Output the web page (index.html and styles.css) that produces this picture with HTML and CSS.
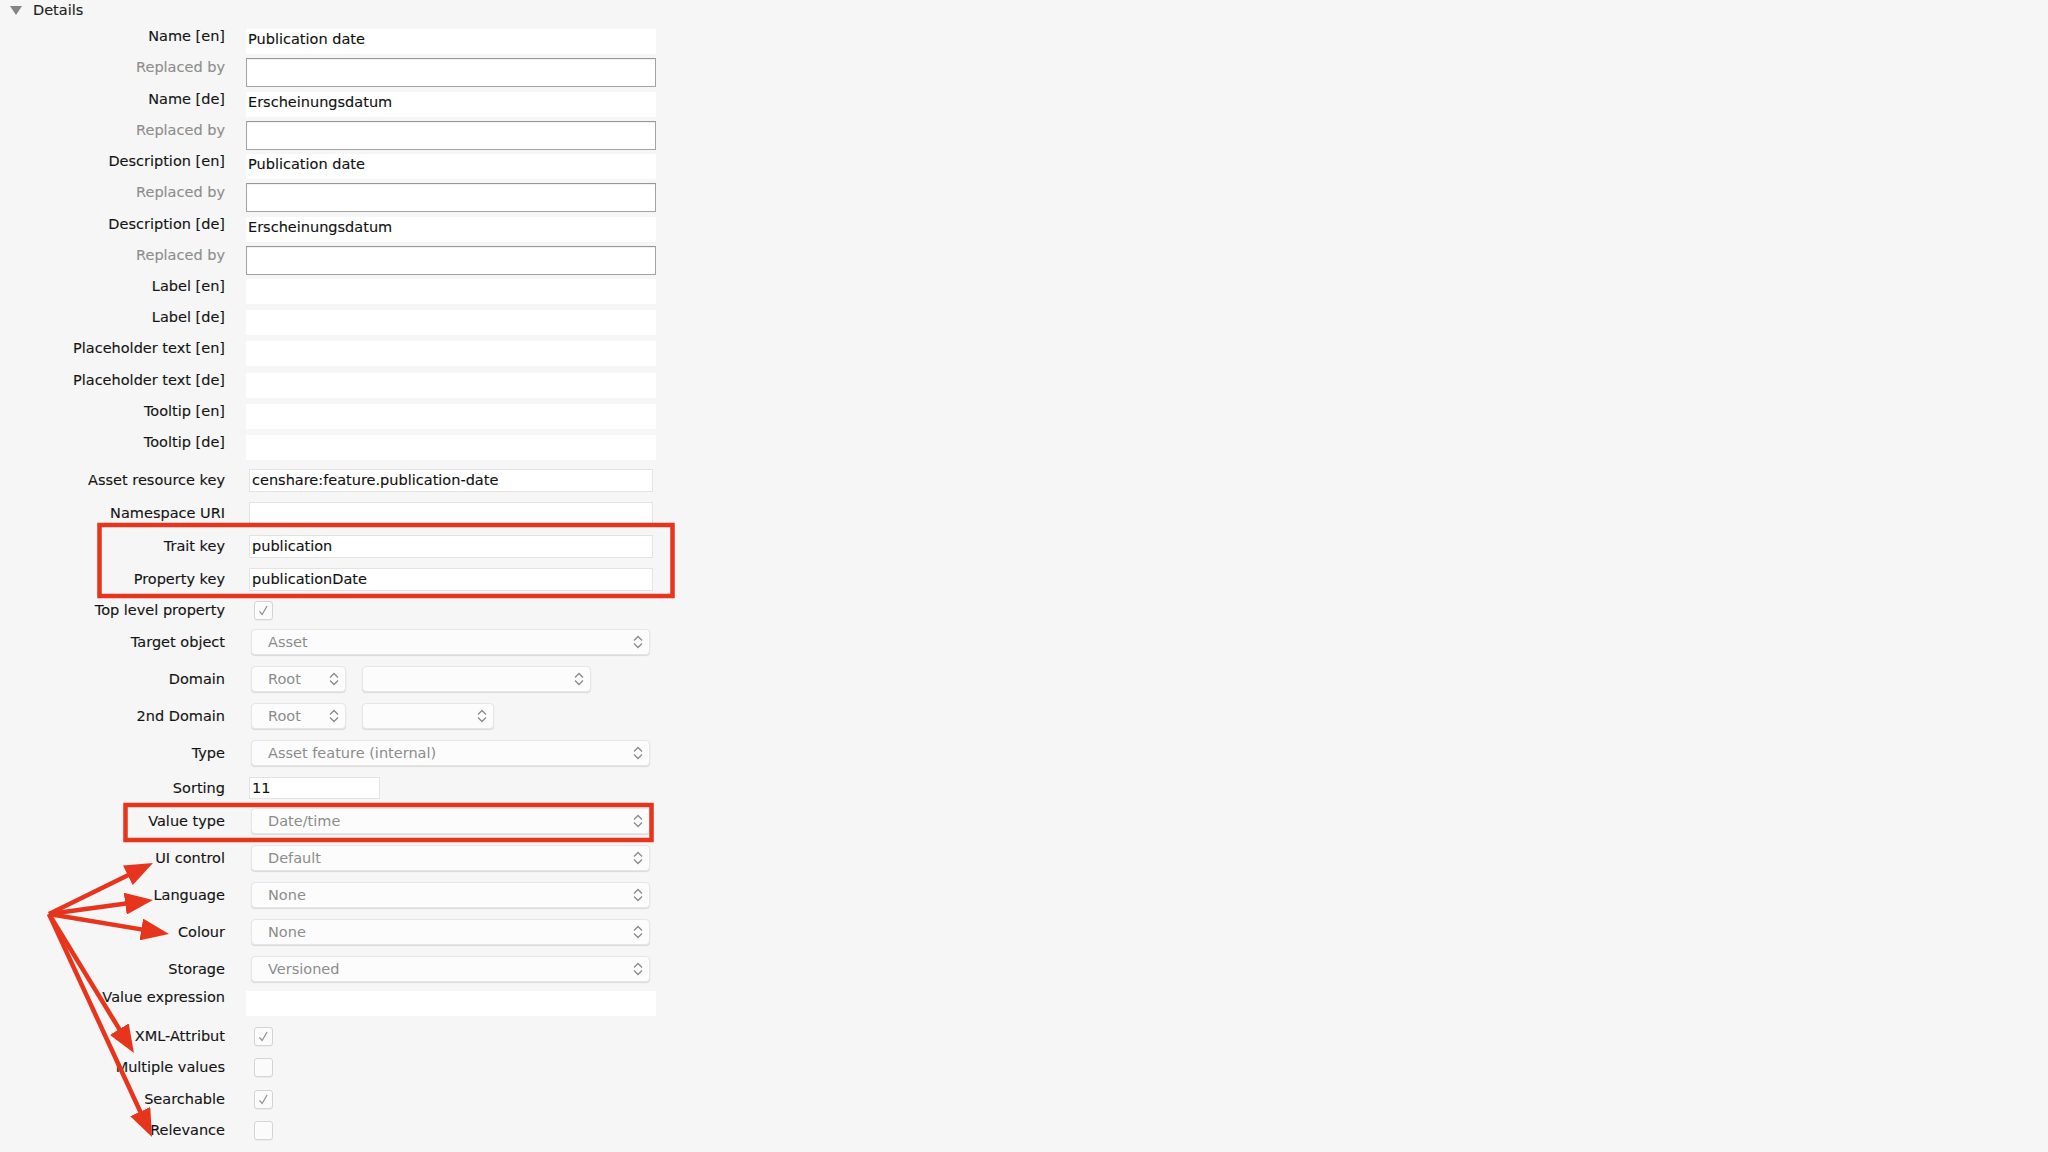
FILE: index.html
```html
<!DOCTYPE html>
<html lang="en">
<head>
  <meta charset="UTF-8" />
  <title>Details</title>
  <link rel="stylesheet" href="styles.css">
</head>
<body>

  <div class="details-head"><span class="twisty"></span>Details</div>

  <div class="form">
    <div class="row r-plain"><label>Name [en]</label><div class="plain">Publication date</div></div>
    <div class="row r-replace"><label class="muted">Replaced by</label><div class="box"></div></div>
    <div class="row r-plain"><label>Name [de]</label><div class="plain">Erscheinungsdatum</div></div>
    <div class="row r-replace"><label class="muted">Replaced by</label><div class="box"></div></div>
    <div class="row r-plain"><label>Description [en]</label><div class="plain">Publication date</div></div>
    <div class="row r-replace"><label class="muted">Replaced by</label><div class="box"></div></div>
    <div class="row r-plain"><label>Description [de]</label><div class="plain">Erscheinungsdatum</div></div>
    <div class="row r-replace"><label class="muted">Replaced by</label><div class="box"></div></div>

    <div class="row r-text"><label>Label [en]</label><div class="plain"></div></div>
    <div class="row r-text"><label>Label [de]</label><div class="plain"></div></div>
    <div class="row r-text"><label>Placeholder text [en]</label><div class="plain"></div></div>
    <div class="row r-text"><label>Placeholder text [de]</label><div class="plain"></div></div>
    <div class="row r-text"><label>Tooltip [en]</label><div class="plain"></div></div>
    <div class="row r-text r-last"><label>Tooltip [de]</label><div class="plain"></div></div>

    <div class="row r-input"><label>Asset resource key</label><div class="input">censhare:feature.publication-date</div></div>
    <div class="row r-input"><label>Namespace URI</label><div class="input"></div></div>
    <div class="row r-input"><label>Trait key</label><div class="input">publication</div></div>
    <div class="row r-input"><label>Property key</label><div class="input">publicationDate</div></div>

    <div class="row r-check r-top"><label>Top level property</label><div class="check on"></div></div>

    <div class="row r-select"><label>Target object</label>
      <div class="select"><span>Asset</span><svg viewBox="0 0 10 14"><path d="M1 5.5L5 1.5L9 5.5M1 8.5L5 12.5L9 8.5"/></svg></div>
    </div>
    <div class="row r-select"><label>Domain</label>
      <div class="select-pair">
        <div class="select root"><span>Root</span><svg viewBox="0 0 10 14"><path d="M1 5.5L5 1.5L9 5.5M1 8.5L5 12.5L9 8.5"/></svg></div>
        <div class="select wide"><span></span><svg viewBox="0 0 10 14"><path d="M1 5.5L5 1.5L9 5.5M1 8.5L5 12.5L9 8.5"/></svg></div>
      </div>
    </div>
    <div class="row r-select"><label>2nd Domain</label>
      <div class="select-pair">
        <div class="select root"><span>Root</span><svg viewBox="0 0 10 14"><path d="M1 5.5L5 1.5L9 5.5M1 8.5L5 12.5L9 8.5"/></svg></div>
        <div class="select mid"><span></span><svg viewBox="0 0 10 14"><path d="M1 5.5L5 1.5L9 5.5M1 8.5L5 12.5L9 8.5"/></svg></div>
      </div>
    </div>
    <div class="row r-select"><label>Type</label>
      <div class="select"><span>Asset feature (internal)</span><svg viewBox="0 0 10 14"><path d="M1 5.5L5 1.5L9 5.5M1 8.5L5 12.5L9 8.5"/></svg></div>
    </div>
    <div class="row r-sort"><label>Sorting</label><div class="input short">11</div></div>
    <div class="row r-select"><label>Value type</label>
      <div class="select"><span>Date/time</span><svg viewBox="0 0 10 14"><path d="M1 5.5L5 1.5L9 5.5M1 8.5L5 12.5L9 8.5"/></svg></div>
    </div>
    <div class="row r-select"><label>UI control</label>
      <div class="select"><span>Default</span><svg viewBox="0 0 10 14"><path d="M1 5.5L5 1.5L9 5.5M1 8.5L5 12.5L9 8.5"/></svg></div>
    </div>
    <div class="row r-select"><label>Language</label>
      <div class="select"><span>None</span><svg viewBox="0 0 10 14"><path d="M1 5.5L5 1.5L9 5.5M1 8.5L5 12.5L9 8.5"/></svg></div>
    </div>
    <div class="row r-select"><label>Colour</label>
      <div class="select"><span>None</span><svg viewBox="0 0 10 14"><path d="M1 5.5L5 1.5L9 5.5M1 8.5L5 12.5L9 8.5"/></svg></div>
    </div>
    <div class="row r-select r-storage"><label>Storage</label>
      <div class="select"><span>Versioned</span><svg viewBox="0 0 10 14"><path d="M1 5.5L5 1.5L9 5.5M1 8.5L5 12.5L9 8.5"/></svg></div>
    </div>

    <div class="row r-expr"><label>Value expression</label><div class="plain"></div></div>

    <div class="row r-check"><label>XML-Attribut</label><div class="check on"></div></div>
    <div class="row r-check"><label>Multiple values</label><div class="check"></div></div>
    <div class="row r-check"><label>Searchable</label><div class="check on"></div></div>
    <div class="row r-check"><label>Relevance</label><div class="check"></div></div>
  </div>

  <!-- red markup drawn over the screenshot -->
  <svg class="annotations" width="2048" height="1152" viewBox="0 0 2048 1152">
    <defs>
      <marker id="head" markerUnits="userSpaceOnUse" markerWidth="28" markerHeight="22"
              refX="12" refY="11" orient="auto">
        <path d="M0 0L28 11L0 22z" fill="#e7351d"/>
      </marker>
    </defs>
    <rect x="99.5" y="525" width="573" height="71" />
    <rect x="125.5" y="805" width="526" height="35" />
    <g class="arrows">
      <line x1="49" y1="914" x2="138.6" y2="870" marker-end="url(#head)"/>
      <line x1="49" y1="914" x2="137.1" y2="902.1" marker-end="url(#head)"/>
      <line x1="49" y1="914" x2="153.2" y2="931.4" marker-end="url(#head)"/>
      <line x1="49" y1="914" x2="125.6" y2="1039.4" marker-end="url(#head)"/>
      <line x1="49" y1="914" x2="145.3" y2="1122.5" marker-end="url(#head)"/>
    </g>
  </svg>

</body>
</html>
```

FILE: styles.css
```css
* {
  margin: 0;
  padding: 0;
  box-sizing: border-box;
}

body {
  background: #f6f6f6;
  font-family: "DejaVu Sans", "Liberation Sans", sans-serif;
  font-size: 14.5px;
  color: #141414;
  -webkit-text-stroke: 0.12px currentColor;
  position: relative;
  min-height: 100vh;
  overflow: hidden;
}

.details-head {
  height: 20px;
  display: flex;
  align-items: center;
  padding-left: 10px;
  color: #222;
}

.twisty {
  width: 0;
  height: 0;
  border-left: 6px solid transparent;
  border-right: 6px solid transparent;
  border-top: 9px solid #858585;
  margin-right: 11px;
}

.form {
  padding-top: 9px;
}

.row {
  display: grid;
  grid-template-columns: 225px 410px;
  column-gap: 21px;
  align-items: start;
}

.row > label {
  text-align: right;
  white-space: nowrap;
  line-height: 14px;
}

.row > label.muted {
  color: #8e8e8e;
  padding-top: 2px;
}

/* row heights follow the Swing form's pitch */
.r-plain { height: 29px; }
.r-replace { height: 33.5px; }
.r-text { height: 31.2px; }
.r-last { height: 34px; }
.r-input { height: 33px; }
.r-input > label { line-height: 23px; }
.r-select { height: 37px; }
.r-select > label { line-height: 26px; }
.r-storage { height: 35px; }
.r-sort { height: 31px; }
.r-sort > label { line-height: 22px; }
.r-expr { height: 36px; }
.r-expr > label { line-height: 12px; }
.r-check { height: 31.3px; }
.r-check > label { line-height: 19px; }
.r-top { height: 28px; }

.plain {
  height: 25px;
  background: #fff;
  padding: 2px 0 0 2px;
  line-height: 17px;
  color: #111;
}

.box {
  height: 29px;
  background: #fff;
  border: 1px solid #a3a3a3;
  border-top-color: #969696;
  box-shadow: inset 0 1px 1px rgba(0, 0, 0, 0.06);
}

.input {
  margin-left: 3px;
  width: 404px;
  height: 23px;
  background: #fff;
  border: 1px solid #e3e3e3;
  padding-left: 2px;
  line-height: 21px;
  color: #111;
}

.input.short {
  width: 131px;
  height: 22px;
  line-height: 20px;
}

.select {
  margin-left: 5px;
  width: 399px;
  height: 26px;
  display: flex;
  align-items: center;
  justify-content: space-between;
  background: #fcfcfc;
  border: 1px solid #e6e6e6;
  border-radius: 4px;
  box-shadow: 0 1px 1px rgba(0, 0, 0, 0.12);
  color: #8c8c8c;
  -webkit-text-stroke: 0;
  padding-left: 16px;
  padding-right: 6px;
  line-height: 24px;
}

.select svg {
  width: 10px;
  height: 14px;
  fill: none;
  stroke: #8a8a8a;
  stroke-width: 1.3;
}

.select-pair {
  display: flex;
  gap: 16px;
  margin-left: 5px;
}

.select-pair .select {
  margin-left: 0;
}

.select.root { width: 95px; }
.select.wide { width: 229px; }
.select.mid { width: 132px; }

.check {
  margin-left: 8px;
  width: 19px;
  height: 19px;
  border: 1px solid #d4d4d4;
  border-radius: 3px;
  background: #fbfbfb;
  box-shadow: 0 1px 0 rgba(0, 0, 0, 0.04);
}

.check.on {
  background: #fbfbfb url("data:image/svg+xml,%3Csvg xmlns='http://www.w3.org/2000/svg' viewBox='0 0 19 19'%3E%3Cpath d='M5 10.5L8 14L13.5 4.5' fill='none' stroke='%23909090' stroke-width='1.4'/%3E%3C/svg%3E") no-repeat center / 17px 17px;
}

.annotations {
  position: absolute;
  top: 0;
  left: 0;
  pointer-events: none;
}

.annotations rect {
  fill: none;
  stroke: #e7351d;
  stroke-width: 4.5;
}

.arrows line {
  stroke: #e7351d;
  stroke-width: 4.5;
}
```
